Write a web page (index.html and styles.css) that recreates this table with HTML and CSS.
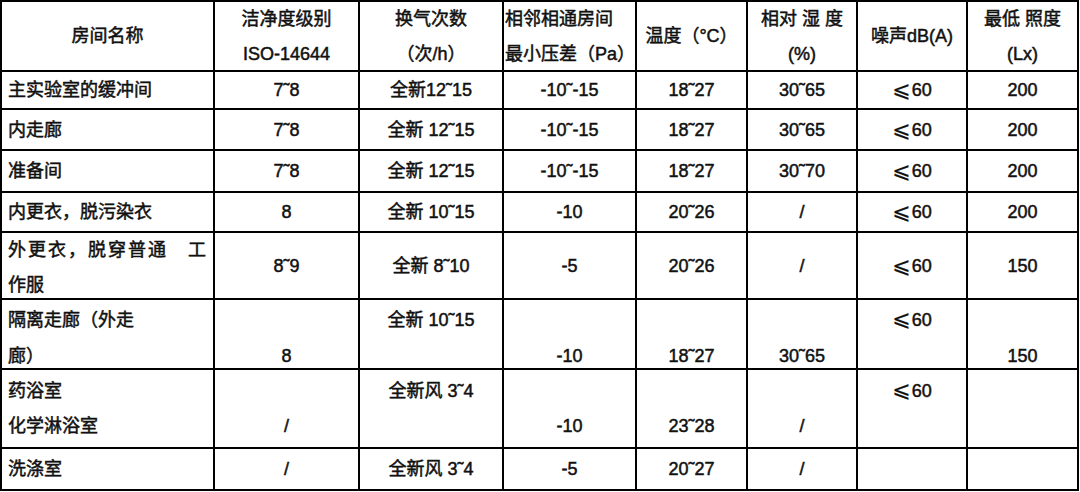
FILE: index.html
```html
<!DOCTYPE html>
<html lang="zh">
<head>
<meta charset="utf-8">
<title>房间参数表</title>
<link rel="stylesheet" href="styles.css">
</head>
<body>
<div class="spec">
  <div class="cell ctr">房间名称</div>
  <div class="cell ctr two">洁净度级别<br>ISO-14644</div>
  <div class="cell ctr two">换气次数<br>（次/h）</div>
  <div class="cell lft two">相邻相通房间<br>最小压差（Pa）</div>
  <div class="cell ctr">温度（°C）</div>
  <div class="cell ctr two">相对 湿 度<br>(%)</div>
  <div class="cell ctr">噪声dB(A)</div>
  <div class="cell ctr two">最低 照度<br>(Lx)</div>

  <div class="cell name">主实验室的缓冲间</div>
  <div class="cell">7˜8</div>
  <div class="cell">全新12˜15</div>
  <div class="cell">-10˜-15</div>
  <div class="cell">18˜27</div>
  <div class="cell">30˜65</div>
  <div class="cell"><span class="le">⩽</span>60</div>
  <div class="cell">200</div>

  <div class="cell name">内走廊</div>
  <div class="cell">7˜8</div>
  <div class="cell">全新 12˜15</div>
  <div class="cell">-10˜-15</div>
  <div class="cell">18˜27</div>
  <div class="cell">30˜65</div>
  <div class="cell"><span class="le">⩽</span>60</div>
  <div class="cell">200</div>

  <div class="cell name">准备间</div>
  <div class="cell">7˜8</div>
  <div class="cell">全新 12˜15</div>
  <div class="cell">-10˜-15</div>
  <div class="cell">18˜27</div>
  <div class="cell">30˜70</div>
  <div class="cell"><span class="le">⩽</span>60</div>
  <div class="cell">200</div>

  <div class="cell name">内更衣，脱污染衣</div>
  <div class="cell">8</div>
  <div class="cell">全新 10˜15</div>
  <div class="cell">-10</div>
  <div class="cell">20˜26</div>
  <div class="cell">/</div>
  <div class="cell"><span class="le">⩽</span>60</div>
  <div class="cell">200</div>

  <div class="cell name wrap"><div class="lines"><span class="spread">外更衣，脱穿普通　工</span><br>作服</div></div>
  <div class="cell">8˜9</div>
  <div class="cell">全新 8˜10</div>
  <div class="cell">-5</div>
  <div class="cell">20˜26</div>
  <div class="cell">/</div>
  <div class="cell"><span class="le">⩽</span>60</div>
  <div class="cell">150</div>

  <div class="cell name split s6">隔离走廊（外走<br>廊）</div>
  <div class="cell split s6"><br>8</div>
  <div class="cell split s6">全新 10˜15</div>
  <div class="cell split s6"><br>-10</div>
  <div class="cell split s6"><br>18˜27</div>
  <div class="cell split s6"><br>30˜65</div>
  <div class="cell split s6"><div class="lines"><span class="le">⩽</span>60</div></div>
  <div class="cell split s6"><br>150</div>

  <div class="cell name split s7">药浴室<br>化学淋浴室</div>
  <div class="cell split s7"><br>/</div>
  <div class="cell split s7">全新风 3˜4</div>
  <div class="cell split s7"><br>-10</div>
  <div class="cell split s7"><br>23˜28</div>
  <div class="cell split s7"><br>/</div>
  <div class="cell split s7"><div class="lines"><span class="le">⩽</span>60</div></div>
  <div class="cell split s7"></div>

  <div class="cell name">洗涤室</div>
  <div class="cell">/</div>
  <div class="cell">全新风 3˜4</div>
  <div class="cell">-5</div>
  <div class="cell">20˜27</div>
  <div class="cell">/</div>
  <div class="cell"></div>
  <div class="cell"></div>
</div>
</body>
</html>
```
FILE: styles.css
```css
html, body {
  margin: 0;
  padding: 0;
  background: #ffffff;
}

.spec {
  display: grid;
  grid-template-columns: 213px 145px 144px 133px 111px 110px 110px 111px;
  grid-template-rows: 70px 38px 41px 42px 40px 67px 70px 79px 42px;
  width: max-content;
  border-top: 2px solid #000000;
  border-left: 2px solid #000000;
  font-family: "Liberation Sans", "Noto Sans CJK SC", sans-serif;
  font-size: 18px;
  font-weight: 400;
  color: #111111;
  -webkit-text-stroke: 0.5px #111111;
}

.cell {
  border-right: 2px solid #000000;
  border-bottom: 2px solid #000000;
  display: flex;
  align-items: center;
  justify-content: center;
  text-align: center;
  line-height: 24px;
  white-space: nowrap;
  overflow: hidden;
}

.cell.name {
  justify-content: flex-start;
  text-align: left;
  padding-left: 6px;
}

.cell.lft {
  justify-content: flex-start;
  text-align: left;
  padding-left: 1px;
}

.cell.two {
  line-height: 35px;
  padding-top: 2px;
}

.cell.wrap {
  line-height: 35px;
  padding-top: 4px;
}

.spread {
  letter-spacing: 2px;
}

.cell.split {
  align-items: flex-start;
}

.cell.s6 {
  line-height: 36px;
  padding-top: 2px;
}

.cell.s7 {
  line-height: 35px;
  padding-top: 4px;
}

.le {
  font-family: "DejaVu Sans", sans-serif;
  font-size: 22px;
  line-height: 1;
  margin-right: 1px;
  -webkit-text-stroke: 0.2px #111111;
}
```
